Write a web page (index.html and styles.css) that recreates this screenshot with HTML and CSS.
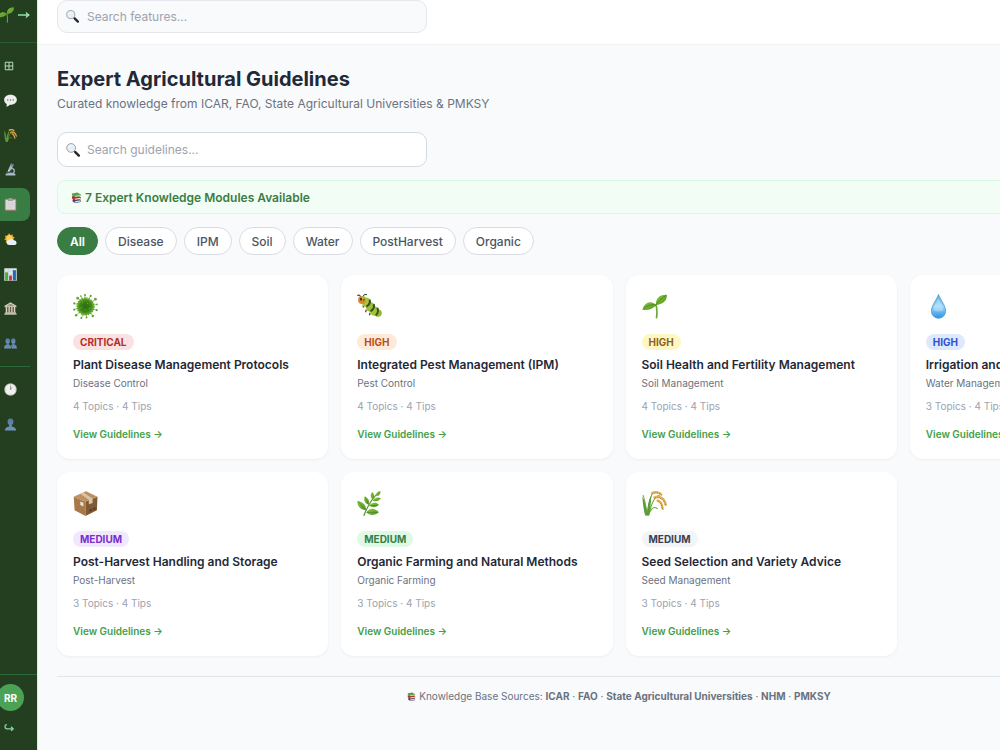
FILE: index.html
```html
<!DOCTYPE html>
<html lang="en">
<head>
<meta charset="utf-8">
<title>Expert Agricultural Guidelines</title>
<link rel="stylesheet" href="styles.css">
</head>
<body>
<svg class="sprite" aria-hidden="true">
  <defs>
    <linearGradient id="leafG" x1="0" y1="0" x2="1" y2="1"><stop offset="0" stop-color="#8ccb3c"/><stop offset="1" stop-color="#4f9426"/></linearGradient>
    <radialGradient id="virusG"><stop offset="0" stop-color="#2d6b12"/><stop offset=".65" stop-color="#3c8519"/><stop offset="1" stop-color="#6fb92c"/></radialGradient>
    <linearGradient id="dropG" x1="0" y1="0" x2="0" y2="1"><stop offset="0" stop-color="#5aa9dc"/><stop offset=".5" stop-color="#9ad8f8"/><stop offset="1" stop-color="#2e90e0"/></linearGradient>
    <linearGradient id="personG" x1="0" y1="0" x2="0" y2="1"><stop offset="0" stop-color="#53779c"/><stop offset="1" stop-color="#7494bd"/></linearGradient>
  </defs>
  <symbol id="seedling" viewBox="0 0 24 24">
    <path d="M13.200 9.500c1.300 4 1.400 9 .7 14" fill="none" stroke="#68a832" stroke-width="1.600"/>
    <path d="M13.500 11C10 6.500 3 6.600.3 15c4.500 1.300 9-.4 13.200-4z" fill="url(#leafG)"/>
    <path d="M13.300 10.500C13 4 17 .3 24 .8c0 6-4.500 9.600-10.700 9.700z" fill="url(#leafG)"/>
    <path d="M1.500 14C6 10 10 10 13.300 10.700 16 6 20 3 23 1.500" fill="none" stroke="#438020" stroke-width=".7"/>
  </symbol>
  <symbol id="magnifier" viewBox="0 0 24 24">
    <path d="M13.500 13.500l3 3" stroke="#777d82" stroke-width="2"/>
    <path d="M16 15.500l6 6" stroke="#24282b" stroke-width="4.200" stroke-linecap="round"/>
    <circle cx="8.800" cy="8.500" r="7.500" fill="#e8f0f5" stroke="#8b949b" stroke-width="1.500"/>
    <path d="M4.500 8.500a4.500 4.500 0 0 1 4-4" fill="none" stroke="#fff" stroke-width="1.500"/>
  </symbol>
  <symbol id="rice" viewBox="0 0 24 24">
    <path d="M5 23.500C4 17 3 9 1 4M5 23.500C6 15 7 8 10 2.500M6 23.500C9 13 12 4 17 4M6 23C9 17 11 14 15 17" fill="none" stroke="#78a83c" stroke-width="1"/>
    <path d="M3 23.500C1.200 17 .8 10 .2 5c3 5 4 11 4.800 15C5.500 13 6.500 8 9 4 8.500 12 8 18 7 23.500z" fill="#5b9d36"/>
    <path d="M9 2.500C13 .3 17 1 19 4M11 6.500C17 4 22 7 23 14M14 9C18 9 19.500 13 20 18" fill="none" stroke="#dfae55" stroke-width="2.200"/>
    <path d="M9 3C14 1 17 2 19 4.500M12 7C18 5 21 9 22.500 14M15 10C18 11 19 14 20 18" fill="none" stroke="#b47d30" stroke-width=".8" stroke-dasharray="1.500 1"/>
  </symbol>
  <symbol id="books" viewBox="0 0 24 24">
    <path d="M4 16l12-2 6 4-1 4-12 2-6-4z" fill="#444064"/><path d="M8 20l13-2v2.500L9 23z" fill="#ddd"/>
    <path d="M2 9l12-2 8 5-1 4-13 2-6-4z" fill="#b62f31"/><path d="M8 14.500l13-2v2.500L9 17z" fill="#eee2d8"/>
    <path d="M2 3l12-2 8 5-1 3-12 2-7-4z" fill="#55a448"/><path d="M8 8.500L21 6.500v2L9 10.500z" fill="#dce6cf"/>
  </symbol>
  <symbol id="virus" viewBox="0 0 24 24">
    <path d="M12 12L11.500 1M12 12L17 1.500M12 12L21.500 5M12 12L23.200 10M12 12L23 15.500M12 12L19 21M12 12L13 22.500M12 12L8 23.500M12 12L3 20.500M12 12L1 15M12 12L1 9M12 12L4.500 4M12 12L7.500 2" stroke="#78af42" stroke-width=".7"/>
    <g fill="#66a333"><circle cx="11.500" cy="1" r="1"/><circle cx="17" cy="1.800" r="1"/><circle cx="21.500" cy="5" r="1.300"/><circle cx="23" cy="10" r=".8"/><circle cx="22.800" cy="15.500" r="1"/><circle cx="19" cy="21" r="1.200"/><circle cx="13" cy="22.500" r=".9"/><circle cx="8" cy="23" r="1"/><circle cx="3" cy="20.500" r="1.200"/><circle cx="1.200" cy="15" r="1"/><circle cx="1.200" cy="9" r="1"/><circle cx="4.500" cy="4" r="1.300"/><circle cx="7.500" cy="2" r=".8"/></g>
    <circle cx="12" cy="12" r="8.200" fill="url(#virusG)"/>
    <circle cx="12" cy="12" r="8.200" fill="none" stroke="#5ea225" stroke-width="1.200" stroke-dasharray="1.300 1"/>
    <g fill="#78b939" opacity=".6"><circle cx="9" cy="8" r=".8"/><circle cx="14" cy="9" r=".7"/><circle cx="8" cy="13" r=".8"/><circle cx="12" cy="15" r=".7"/><circle cx="16" cy="14" r=".8"/></g>
  </symbol>
  <symbol id="bug" viewBox="0 0 24 24">
    <path d="M3.500 3C3 1 1.500 .7.300 1.500M6 2.500C6.500.5 8 0 9.500.8" fill="none" stroke="#333a33" stroke-width="1"/>
    <path d="M6 10.500l.3 2.500M9 15l-.8 2.500M12.500 18l-.5 2.500" stroke="#8b4a2c" stroke-width="1.400"/>
    <ellipse cx="20.200" cy="18.300" rx="3.600" ry="3.500" fill="#8fb830"/>
    <ellipse cx="17" cy="16.500" rx="4.400" ry="4.600" fill="#9fc539"/><path d="M19.500 13.300q1.800 4-1.500 7.200" fill="none" stroke="#3c4f22" stroke-width="1.800"/>
    <ellipse cx="13" cy="12.500" rx="4.400" ry="4.600" fill="#99c037"/><path d="M16 9.800q1.500 4-3 6.800" fill="none" stroke="#3c4f22" stroke-width="2"/>
    <ellipse cx="9" cy="8" rx="4.400" ry="4.600" fill="#a5ca3e"/><path d="M12 5.500q1.500 4-3 6.700" fill="none" stroke="#3c4f22" stroke-width="2"/>
    <circle cx="4.800" cy="5.800" r="3.800" fill="#df852f"/><path d="M4 2.200q3-.8 4.800 2l-.3 3q-3-1-4.500-5z" fill="#a5bf3a"/><ellipse cx="3.800" cy="5" rx=".9" ry="1.400" fill="#352f25"/><circle cx="6.700" cy="5.500" r=".8" fill="#493a22"/>
  </symbol>
  <symbol id="drop" viewBox="0 0 24 24"><path d="M12 .5C10 6 5.200 11 5.200 16.500a6.800 6.800 0 0 0 13.600 0C18.800 11 14 6 12 .5z" fill="url(#dropG)" stroke="#4b9bd3" stroke-width=".8"/><path d="M12 4c-2 5-4.500 8-4.500 11.500 3 1.500 6 1.500 9 0C16.500 12 14 9 12 4z" fill="#d6f1ff" opacity=".4"/></symbol>
  <symbol id="box" viewBox="0 0 24 24">
    <path d="M.7 5.500L12 10v14L1.500 18.500z" fill="#a87848"/><path d="M12 10l11.500-4.500-.5 13L12 24z" fill="#805a34"/><path d="M.7 5.500L12.500.2l11 5.300L12 10z" fill="#be9160"/>
    <path d="M7 2.700l3-1.300 8.800 6v4l-3.600 1.400V8.500z" fill="#d9c6a9"/><path d="M7 10l3 1.300v3.500l-3-1.300z" fill="#e9e3d6"/><path d="M16 18l2-1v2l-2 1zM19.500 16.500l2-1v2l-2 1z" fill="#4d351e"/>
  </symbol>
  <symbol id="herb" viewBox="0 0 24 24">
    <path d="M6.500 24C9 17 13 9 20 2" fill="none" stroke="#5d9837" stroke-width="1.200"/>
    <g fill="url(#leafG)"><path d="M8.500 18.500C3 18 0 14 .5 9.500 6 10 9 14 8.500 18.500z"/><path d="M11 13C7 12 6 8 7.500 5 11 7 12.500 10 11 13z"/><path d="M15 8c-2.500-2-2.500-4.500-.5-7C17 3 17 6 15 8z"/><path d="M18.500 5C18 2 20 .3 22.500 0c.3 3-1.500 5-4 5z"/><path d="M15 9c2-3 5.500-3.500 8-2-2 3-5.500 3.500-8 2z"/><path d="M12 14c2-3 6-3.500 9-1-2.500 3-6 3.500-9 1z"/><path d="M9 20.500c3-4.500 8-4.500 12 0-4 3.500-9 3.500-12 0z"/></g>
    <path d="M1 10l7 8M8 6l3 7M9 20.500h11M12 14h8" stroke="#407d25" stroke-width=".6" fill="none"/>
  </symbol>
  <symbol id="chat" viewBox="0 0 24 24"><path d="M12 1.500c7 0 11.700 3.900 11.700 9.300S19 20 12 20l-2 .1C8.500 22 6 23 4 23c1-1.500 1.400-3 1-4.500C2 17 .3 14.500.3 10.800.3 5.400 5 1.500 12 1.500z" fill="#eceeec"/><g fill="#626862"><circle cx="7" cy="11" r="1.300"/><circle cx="12" cy="11" r="1.300"/><circle cx="17" cy="11" r="1.300"/></g></symbol>
  <symbol id="microscope" viewBox="0 0 24 24"><path d="M15 10c6 2 5 8 0 10" fill="none" stroke="#9cb0bf" stroke-width="2.500"/><path d="M13 1l5 2-5 11-5-2z" fill="#a9bac6"/><path d="M14 1l4 2-2 4-4-2z" fill="#6d7d88"/><path d="M4 15l11 1v2.500L4 17.500z" fill="#53636d"/><path d="M8 12l3 1-1 3-3-1z" fill="#e2e8ec"/><path d="M3 20c4-2 14-2 18 0v3H3z" fill="#a7bac8"/></symbol>
  <symbol id="clipboard" viewBox="0 0 24 24"><rect x="1.500" y="1.500" width="21" height="22" rx="1.500" fill="#a48672"/><path d="M3 3.500h18v18H3z" fill="#dad9d8"/><path d="M8 2.500q1-2.500 4-2.500t4 2.500l1 3H7z" fill="#9ca0a0"/><path d="M6 9h12M6 12h12M6 15h12M6 18h9" stroke="#cbcccb" stroke-width=".8"/></symbol>
  <symbol id="weather" viewBox="0 0 24 24"><path d="M10 .5l2 3.500 4-1.500v4l4 1.500-3 3 1 4-9 5-2-3-4 1 1-4-3.500-2L3 9 1.500 5l4 .2z" fill="#eda92b"/><circle cx="10" cy="9.500" r="5.500" fill="#ffcf4b"/><path d="M9 22a4.500 4.500 0 0 1 .5-9c1-3 7-4 8.500.5 6 0 7 8 2 8.500z" fill="#e9f0f5"/></symbol>
  <symbol id="chart" viewBox="0 0 24 24"><path d="M.5.5h23v23H.5z" fill="#dfe8ec"/><path d="M1 6h22M1 12h22M1 18h22M8 1v22M16 1v22" stroke="#a9bdc9" stroke-width=".7"/><path d="M2 8h5.500v15H2z" fill="#54a83b"/><path d="M9.500 14h5v9h-5z" fill="#bd3432"/><path d="M16.500 4H22v19h-5.500z" fill="#2865b4"/></symbol>
  <symbol id="bank" viewBox="0 0 24 24"><path d="M12 .5L23 7v2.500H1V7z" fill="#d2cdb5"/><path d="M3 9h18v11H3z" fill="#5f5e4a"/><path d="M4.500 9v11M9.500 9v11M14.500 9v11M19.500 9v11" stroke="#d8d3bd" stroke-width="2.400"/><path d="M2 19h20v2h1.500v2.500H.5V21H2z" fill="#c5bea3"/><path d="M5 7l7-4 7 4z" fill="#8e8a74"/></symbol>
  <symbol id="people" viewBox="0 0 24 24"><g fill="url(#personG)"><ellipse cx="6.800" cy="7.500" rx="4" ry="5"/><ellipse cx="17.200" cy="7.500" rx="4" ry="5"/><path d="M5 11h4v3c3 .8 4 2.500 4 7H.3c0-4.500 1-6.200 4.700-7z"/><path d="M15.500 11h4v3c3 .8 4.200 2.500 4.200 7H14c0-3-.5-5-1.500-6l3-1z"/></g></symbol>
  <symbol id="clock" viewBox="0 0 24 24"><circle cx="12" cy="12" r="11.500" fill="#babdba"/><circle cx="12" cy="12" r="10" fill="#f0f0ed"/><path d="M12 12.500V4.500M12 12.500l3-5" fill="none" stroke="#777c77" stroke-width="1.200"/><path d="M12 3v1M12 20v1M3 12h1M20 12h1" stroke="#777"/></symbol>
  <symbol id="person" viewBox="0 0 24 24"><path d="M12 .8c4 0 6 3 5.300 7-.4 2.500-1.500 4-2.800 5v3c5 1 7.500 3 8 7.500h-21c.5-4.500 3-6.500 8-7.500v-3C8.200 11.800 7 10.300 6.700 7.800 6 3.800 8 .8 12 .8z" fill="url(#personG)"/></symbol>
  <symbol id="grid" viewBox="0 0 24 24"><path d="M3 3h18v18H3zM12 3v18M3 12h18" fill="none" stroke="#b4e0b8" stroke-width="2.400"/></symbol>
  <symbol id="logout" viewBox="0 0 24 24"><path d="M7 4C1 4 1 14 7 14h15M17 9l5 5-5 5" fill="none" stroke="#86d79a" stroke-width="3"/></symbol>
  <symbol id="arrow" viewBox="0 0 24 24"><path d="M0 12h22" stroke="#8fe0a6" stroke-width="3"/><path d="M15 5l9 7-9 7 2-7z" fill="#8fe0a6"/></symbol>
</svg>

<div class="app">
  <aside class="sidebar">
    <div class="brand">
      <svg class="brand-leaf"><use href="#seedling"/></svg>
      <button class="expand" aria-label="Expand menu"><svg class="brand-arrow"><use href="#arrow"/></svg></button>
    </div>
    <nav class="nav nav-main" aria-label="Main">
      <a class="nav-item nav-item-glyph" href="#" aria-label="Dashboard"><svg class="nav-icon-small"><use href="#grid"/></svg></a>
      <a class="nav-item" href="#" aria-label="Chat"><svg class="nav-icon"><use href="#chat"/></svg></a>
      <a class="nav-item" href="#" aria-label="Crops"><svg class="nav-icon"><use href="#rice"/></svg></a>
      <a class="nav-item" href="#" aria-label="Diagnosis"><svg class="nav-icon"><use href="#microscope"/></svg></a>
      <a class="nav-item nav-item-active" href="#" aria-label="Guidelines" aria-current="page"><svg class="nav-icon"><use href="#clipboard"/></svg></a>
      <a class="nav-item" href="#" aria-label="Weather"><svg class="nav-icon"><use href="#weather"/></svg></a>
      <a class="nav-item" href="#" aria-label="Market"><svg class="nav-icon"><use href="#chart"/></svg></a>
      <a class="nav-item" href="#" aria-label="Schemes"><svg class="nav-icon"><use href="#bank"/></svg></a>
      <a class="nav-item" href="#" aria-label="Community"><svg class="nav-icon"><use href="#people"/></svg></a>
    </nav>
    <nav class="nav nav-more" aria-label="Account">
      <a class="nav-item" href="#" aria-label="History"><svg class="nav-icon"><use href="#clock"/></svg></a>
      <a class="nav-item" href="#" aria-label="Profile"><svg class="nav-icon"><use href="#person"/></svg></a>
    </nav>
    <div class="account">
      <div class="avatar">RR</div>
      <button class="logout" aria-label="Log out"><svg class="nav-icon-small"><use href="#logout"/></svg></button>
    </div>
  </aside>

  <div class="page">
    <header class="topbar">
      <label class="search search-top"><svg class="search-icon"><use href="#magnifier"/></svg><input class="search-input" type="text" placeholder="Search features..." aria-label="Search features"></label>
    </header>
    <main class="content">
      <h1 class="title">Expert Agricultural Guidelines</h1>
      <p class="subtitle">Curated knowledge from ICAR, FAO, State Agricultural Universities &amp; PMKSY</p>
      <label class="search search-main"><svg class="search-icon search-icon-large"><use href="#magnifier"/></svg><input class="search-input" type="text" placeholder="Search guidelines..." aria-label="Search guidelines"></label>
      <div class="banner"><svg class="book-icon"><use href="#books"/></svg>7 Expert Knowledge Modules Available</div>
      <div class="filters">
        <button class="chip chip-active">All</button>
        <button class="chip">Disease</button>
        <button class="chip">IPM</button>
        <button class="chip">Soil</button>
        <button class="chip">Water</button>
        <button class="chip">PostHarvest</button>
        <button class="chip">Organic</button>
      </div>
      <section class="cards">
        <article class="card"><svg class="card-icon"><use href="#virus"/></svg><span class="badge badge-red">CRITICAL</span><h2 class="card-title">Plant Disease Management Protocols</h2><p class="card-category">Disease Control</p><p class="card-count">4 Topics · 4 Tips</p><a class="card-link" href="#">View Guidelines →</a></article>
        <article class="card"><svg class="card-icon"><use href="#bug"/></svg><span class="badge badge-orange">HIGH</span><h2 class="card-title">Integrated Pest Management (IPM)</h2><p class="card-category">Pest Control</p><p class="card-count">4 Topics · 4 Tips</p><a class="card-link" href="#">View Guidelines →</a></article>
        <article class="card"><svg class="card-icon"><use href="#seedling"/></svg><span class="badge badge-yellow">HIGH</span><h2 class="card-title">Soil Health and Fertility Management</h2><p class="card-category">Soil Management</p><p class="card-count">4 Topics · 4 Tips</p><a class="card-link" href="#">View Guidelines →</a></article>
        <article class="card"><svg class="card-icon"><use href="#drop"/></svg><span class="badge badge-blue">HIGH</span><h2 class="card-title">Irrigation and Water Management</h2><p class="card-category">Water Management</p><p class="card-count">3 Topics · 4 Tips</p><a class="card-link" href="#">View Guidelines →</a></article>
        <article class="card"><svg class="card-icon"><use href="#box"/></svg><span class="badge badge-purple">MEDIUM</span><h2 class="card-title">Post-Harvest Handling and Storage</h2><p class="card-category">Post-Harvest</p><p class="card-count">3 Topics · 4 Tips</p><a class="card-link" href="#">View Guidelines →</a></article>
        <article class="card"><svg class="card-icon"><use href="#herb"/></svg><span class="badge badge-green">MEDIUM</span><h2 class="card-title">Organic Farming and Natural Methods</h2><p class="card-category">Organic Farming</p><p class="card-count">3 Topics · 4 Tips</p><a class="card-link" href="#">View Guidelines →</a></article>
        <article class="card"><svg class="card-icon"><use href="#rice"/></svg><span class="badge badge-gray">MEDIUM</span><h2 class="card-title">Seed Selection and Variety Advice</h2><p class="card-category">Seed Management</p><p class="card-count">3 Topics · 4 Tips</p><a class="card-link" href="#">View Guidelines →</a></article>
      </section>
      <footer class="sources"><svg class="source-icon"><use href="#books"/></svg><p class="source-text">Knowledge Base Sources: <strong>ICAR</strong> · <strong>FAO</strong> · <strong>State Agricultural Universities</strong> · <strong>NHM</strong> · <strong>PMKSY</strong></p></footer>
    </main>
  </div>
</div>
</body>
</html>
```
FILE: styles.css
```css
* { box-sizing: border-box; }
body { margin: 0; background: #f8fafc; color: #1f2937; font-family: Inter, "Liberation Sans", sans-serif; font-size: 12px; overflow-x: hidden; }
h1, h2, p { margin: 0; }
button, input { font: inherit; }
a { text-decoration: none; }
svg { display: block; flex: none; }
.sprite { position: absolute; width: 0; height: 0; }

.app { display: flex; min-height: 100vh; }

/* Collapsed sidebar, tucked partly past the left edge */
.sidebar { flex: none; display: flex; flex-direction: column; width: 53px; margin-left: -16px; background: #243f1f; }
.brand { display: flex; align-items: center; gap: 4px; height: 43px; padding: 0 7px 12px 14px; border-bottom: 1px solid #2a5a32; }
.brand-leaf { width: 16px; height: 16px; }
.expand { padding: 0; border: 0; background: none; }
.brand-arrow { width: 12px; height: 12px; }
.nav { display: flex; flex-direction: column; justify-content: space-between; padding: 0 7px; }
.nav-main { height: 311px; margin-top: 6px; }
.nav-more { height: 75px; margin: 6px 7px 0; padding: 6px 0 0; border-top: 1px solid #2d6a3a; }
.nav-item { display: flex; align-items: center; justify-content: center; height: 33px; border-radius: 8px; }
.nav-item-glyph { padding-right: 3px; }
.nav-item-active { background: #3a7d44; }
.nav-icon { width: 13px; height: 13px; }
.nav-icon-small { width: 10px; height: 10px; }
.account { display: flex; flex-direction: column; align-items: center; gap: 12px; margin-top: auto; padding: 9px 0 17px; border-top: 1px solid #2d6a3a; }
.avatar { display: flex; align-items: center; justify-content: center; width: 27px; height: 27px; border-radius: 50%; background: #4ca254; color: #fff; font-size: 10px; font-weight: 700; }
.logout { padding: 0 3px 0 0; border: 0; background: none; }

.page { flex: 1; min-width: 1163px; border-left: 1px solid #e5e7eb; }
.topbar { height: 45px; padding: 0 19px; background: #fff; border-bottom: 1px solid #f0f2f5; }
.search { display: flex; align-items: center; gap: 8px; width: 370px; padding: 0 8px; }
.search-top { height: 33px; background: #f8fafc; border: 1px solid #e5e7eb; border-radius: 10px; }
.search-main { gap: 7px; height: 35px; margin-bottom: 13px; background: #fff; border: 1px solid #d6dae0; border-radius: 10px; }
.search-icon { width: 13px; height: 13px; }
.search-icon-large { width: 14px; height: 14px; }
.search-input { flex: 1; min-width: 0; padding: 0; border: 0; outline: 0; background: none; color: #1f2937; }
.search-input::placeholder { color: #9ca3af; }

.content { padding: 21px 19px 0; }
.title { font-size: 20px; line-height: 26px; font-weight: 700; }
.subtitle { margin: 4px 0 20px; line-height: 16px; color: #6b7280; }
.banner { display: flex; align-items: center; gap: 3px; height: 34px; padding: 0 13px; margin-bottom: 13px; background: #f2fdf5; border: 1px solid #d8f9e3; border-radius: 8px; color: #3a7d44; font-weight: 600; }
.book-icon { width: 11px; height: 11px; }
.filters { display: flex; gap: 7px; margin-bottom: 20px; }
.chip { height: 28px; padding: 0 12px; border: 1px solid #d9dce2; border-radius: 14px; background: #fff; color: #4b5563; font-weight: 500; }
.chip-active { background: #3a7d44; border-color: #3a7d44; color: #fff; font-weight: 600; }

.cards { display: grid; grid-template-columns: repeat(4, minmax(0, 1fr)); gap: 13px; }
.card { display: flex; flex-direction: column; align-items: flex-start; padding: 19px 16px 18px; background: #fff; border-radius: 13px; box-shadow: 0 1px 3px rgba(15, 23, 42, 0.05); }
.card-icon { width: 25px; height: 25px; margin-bottom: 15px; }
.badge { padding: 0 7px; border-radius: 8px; font-size: 10px; line-height: 16px; font-weight: 700; }
.badge-red { background: #fbe2e2; color: #b3302a; }
.badge-orange { background: #fdebd7; color: #bb4d25; }
.badge-yellow { background: #fdf8c3; color: #945e1c; }
.badge-blue { background: #dee9fc; color: #2e50d4; }
.badge-purple { background: #f1e8fe; color: #7a2dcc; }
.badge-green { background: #defae6; color: #3a7d44; }
.badge-gray { background: #f3f4f6; color: #374151; }
.card-title { margin-top: 7px; font-size: 12px; line-height: 16px; font-weight: 600; white-space: nowrap; }
.card-category { margin-top: 3px; font-size: 10px; line-height: 14px; color: #6b7280; }
.card-count { margin-top: 9px; font-size: 10px; line-height: 14px; color: #9ca3af; }
.card-link { margin-top: 14px; font-size: 10px; line-height: 14px; font-weight: 600; color: #43a047; }

.sources { display: flex; align-items: center; justify-content: center; gap: 3px; margin-top: 20px; padding: 12px 0; border-top: 1px solid #e2e5e9; color: #6b7280; font-size: 10px; line-height: 14px; }
.source-icon { width: 9px; height: 9px; }
```
